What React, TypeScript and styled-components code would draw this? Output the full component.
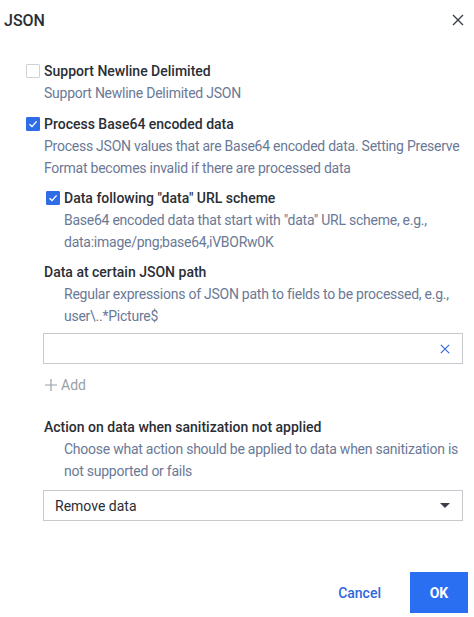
import React, { useState } from 'react';
import styled, { createGlobalStyle } from 'styled-components';

const GlobalStyle = createGlobalStyle`
  html, body {
    margin: 0;
    padding: 0;
    background: #ffffff;
  }
  body {
    font-family: Roboto, "Noto Sans", "Liberation Sans", sans-serif;
    -webkit-font-smoothing: antialiased;
  }
`;

const Dialog = styled.div`
  width: 474px;
  height: 617px;
  box-sizing: border-box;
  display: flex;
  flex-direction: column;
  background: #ffffff;
`;

const Header = styled.div`
  display: flex;
  align-items: center;
  justify-content: space-between;
  height: 40px;
  padding: 0 10px 0 4px;
`;

const Title = styled.h1`
  margin: 0;
  font-size: 16px;
  font-weight: 500;
  color: #2a2e36;
`;

const IconButton = styled.button<{ $color?: string }>`
  border: none;
  background: none;
  padding: 0;
  display: flex;
  align-items: center;
  justify-content: center;
  cursor: pointer;
  color: ${(p) => p.$color || '#3a3e46'};
`;

const Body = styled.div`
  flex: 1;
  padding: 20px 11px 0 26px;
  display: flex;
  flex-direction: column;
`;

const Option = styled.div<{ $indent?: number; $gap?: number }>`
  display: flex;
  flex-direction: column;
  margin-left: ${(p) => p.$indent || 0}px;
  margin-top: ${(p) => p.$gap || 0}px;
`;

const LabelRow = styled.label`
  display: flex;
  align-items: center;
  gap: 4px;
  font-size: 14px;
  line-height: 22px;
  font-weight: 500;
  color: #2a2e36;
  cursor: pointer;
`;

const Box = styled.span<{ $checked: boolean }>`
  width: 14px;
  height: 14px;
  box-sizing: border-box;
  display: flex;
  align-items: center;
  justify-content: center;
  border: 1px solid ${(p) => (p.$checked ? '#2e6de6' : '#cfd2d6')};
  background: ${(p) => (p.$checked ? '#2e6de6' : '#ffffff')};
  border-radius: 1px;
`;

const Desc = styled.div<{ $indent?: number }>`
  margin-left: ${(p) => p.$indent ?? 18}px;
  font-size: 14px;
  line-height: 22px;
  letter-spacing: -0.25px;
  color: #6a7996;
`;

const FieldLabel = styled.div<{ $gap?: number }>`
  margin-left: 18px;
  margin-top: ${(p) => p.$gap || 0}px;
  font-size: 14px;
  line-height: 22px;
  font-weight: 500;
  color: #2a2e36;
`;

const Field = styled.div<{ $gap?: number }>`
  margin-left: 17px;
  margin-top: ${(p) => p.$gap || 0}px;
  height: 31px;
  box-sizing: border-box;
  border: 1px solid #c6c9cd;
  display: flex;
  align-items: center;
  padding: 0 12px 0 11px;
`;

const TextInput = styled.input`
  flex: 1;
  border: none;
  outline: none;
  font: inherit;
  font-size: 14px;
  background: transparent;
`;

const SelectText = styled.span`
  flex: 1;
  font-size: 14px;
  color: #2a2e36;
`;

const AddLink = styled.button`
  margin: 10px 0 0 19px;
  align-self: flex-start;
  border: none;
  background: none;
  padding: 0;
  display: flex;
  align-items: center;
  gap: 4px;
  font-family: inherit;
  font-size: 14px;
  line-height: 22px;
  color: #9aa0a8;
  cursor: pointer;
`;

const Footer = styled.div`
  display: flex;
  justify-content: flex-end;
  align-items: center;
  gap: 29px;
  padding: 0 6px 4px 0;
`;

const TextButton = styled.button`
  border: none;
  background: none;
  padding: 0;
  font-family: inherit;
  font-size: 14px;
  font-weight: 500;
  color: #2f68dc;
  cursor: pointer;
`;

const PrimaryButton = styled.button`
  width: 58px;
  height: 41px;
  border: none;
  background: #2a6ef2;
  color: #ffffff;
  font-family: inherit;
  font-size: 14px;
  font-weight: 700;
  cursor: pointer;
`;

const Check = () => (
  <svg width="10" height="10" viewBox="0 0 10 10">
    <path d="M1.5 5.2 L4 7.6 L8.6 2.4" fill="none" stroke="#fff" strokeWidth="1.4" />
  </svg>
);

const Cross = ({ size }: { size: number }) => (
  <svg width={size} height={size} viewBox="0 0 12 12">
    <path d="M1 1 L11 11 M11 1 L1 11" stroke="currentColor" strokeWidth="1.4" fill="none" />
  </svg>
);

interface CheckOptionProps {
  checked: boolean;
  onToggle: () => void;
  label: string;
}

const CheckOption: React.FC<CheckOptionProps> = ({ checked, onToggle, label }) => (
  <LabelRow onClick={onToggle}>
    <Box $checked={checked}>{checked && <Check />}</Box>
    {label}
  </LabelRow>
);

const App: React.FC = () => {
  const [newline, setNewline] = useState(false);
  const [base64, setBase64] = useState(true);
  const [dataUrl, setDataUrl] = useState(true);
  const [path, setPath] = useState('');

  return (
    <>
      <GlobalStyle />
      <Dialog>
        <Header>
          <Title>JSON</Title>
          <IconButton>
            <Cross size={12} />
          </IconButton>
        </Header>
        <Body>
          <Option>
            <CheckOption checked={newline} onToggle={() => setNewline(!newline)} label="Support Newline Delimited" />
            <Desc>Support Newline Delimited JSON</Desc>
          </Option>
          <Option $gap={9}>
            <CheckOption checked={base64} onToggle={() => setBase64(!base64)} label="Process Base64 encoded data" />
            <Desc>
              Process JSON values that are Base64 encoded data. Setting Preserve Format becomes invalid if there are
              processed data
            </Desc>
          </Option>
          <Option $indent={20} $gap={8}>
            <CheckOption checked={dataUrl} onToggle={() => setDataUrl(!dataUrl)} label={'Data following "data" URL scheme'} />
            <Desc>Base64 encoded data that start with "data" URL scheme, e.g., data:image/png;base64,iVBORw0K</Desc>
          </Option>
          <FieldLabel $gap={8}>Data at certain JSON path</FieldLabel>
          <Desc $indent={38}>Regular expressions of JSON path to fields to be processed, e.g., user\..*Picture$</Desc>
          <Field $gap={6}>
            <TextInput value={path} onChange={(e) => setPath(e.target.value)} />
            <IconButton $color="#2f68dc">
              <Cross size={10} />
            </IconButton>
          </Field>
          <AddLink>
            <svg width="12" height="12" viewBox="0 0 12 12">
              <path d="M6 0 V12 M0 6 H12" stroke="currentColor" strokeWidth="1.2" />
            </svg>
            Add
          </AddLink>
          <FieldLabel $gap={20}>Action on data when sanitization not applied</FieldLabel>
          <Desc $indent={38}>Choose what action should be applied to data when sanitization is not supported or fails</Desc>
          <Field $gap={8}>
            <SelectText>Remove data</SelectText>
            <svg width="10" height="6" viewBox="0 0 10 6">
              <path d="M0 0 H10 L5 5 Z" fill="#3a3e46" />
            </svg>
          </Field>
        </Body>
        <Footer>
          <TextButton>Cancel</TextButton>
          <PrimaryButton>OK</PrimaryButton>
        </Footer>
      </Dialog>
    </>
  );
};

export default App;
